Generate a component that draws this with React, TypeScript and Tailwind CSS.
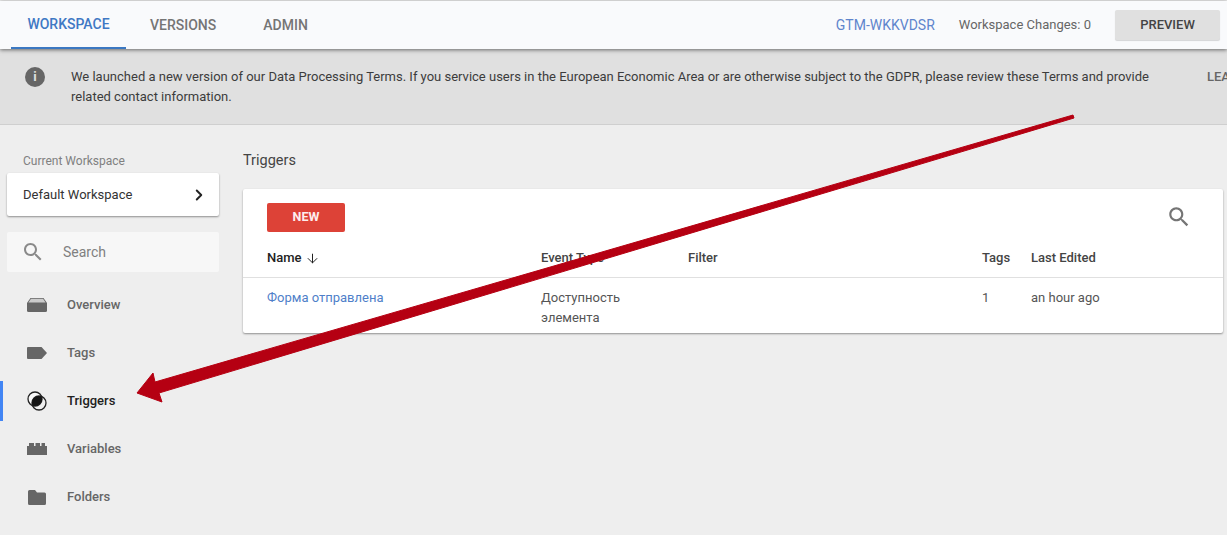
import React from 'react';
import { ArrowDown, ChevronRight } from 'lucide-react';

const font = { fontFamily: 'Roboto, sans-serif' };

function SearchIcon({ size, color }: { size: number; color: string }) {
  return (
    <svg width={size} height={size} viewBox="0 0 24 24" fill={color}>
      <path d="M15.5 14h-.79l-.28-.27C15.41 12.59 16 11.11 16 9.5 16 5.91 13.09 3 9.5 3S3 5.91 3 9.5 5.91 16 9.5 16c1.61 0 3.09-.59 4.23-1.57l.27.28v.79l5 4.99L20.49 19l-4.99-5zm-6 0C7.01 14 5 11.99 5 9.5S7.01 5 9.5 5 14 7.01 14 9.5 11.99 14 9.5 14z" />
    </svg>
  );
}

function OverviewIcon() {
  return (
    <svg width="20" height="14" viewBox="0 0 20 14">
      <path d="M3.5 0H16.5L20 5V12.5Q20 14 18.5 14H1.5Q0 14 0 12.5V5Z" fill="#666" />
      <path d="M4 .8H16L18.6 4.4H1.4Z" fill="#eee" opacity="0.75" />
    </svg>
  );
}

function TagIcon() {
  return (
    <svg width="20" height="12" viewBox="0 0 20 12">
      <path d="M1 0H14.5L20 6L14.5 12H1Q0 12 0 11V1Q0 0 1 0Z" fill="#666" />
    </svg>
  );
}

function TriggerIcon() {
  return (
    <svg width="20" height="20" viewBox="0 0 20 20">
      <circle cx="8" cy="8" r="7" fill="#f8f8f8" stroke="#222" strokeWidth="1.3" />
      <circle cx="12" cy="12" r="7" fill="none" stroke="#222" strokeWidth="1.3" />
      <path d="M14.53 5.47A7 7 0 0 1 5.47 14.53A7 7 0 0 1 14.53 5.47Z" fill="#151515" />
    </svg>
  );
}

function VariableIcon() {
  return (
    <svg width="20" height="12" viewBox="0 0 20 12">
      <path d="M0 3H2V0H7V3H8.5V0H13V3H14.5V0H18V3H20V12H0Z" fill="#666" />
    </svg>
  );
}

function FolderIcon() {
  return (
    <svg width="18" height="15" viewBox="0 0 18 15">
      <path d="M1.5 0H7L9 2.5H16.5Q18 2.5 18 4V13.5Q18 15 16.5 15H1.5Q0 15 0 13.5V1.5Q0 0 1.5 0Z" fill="#666" />
    </svg>
  );
}

const nav = [
  { label: 'Overview', icon: <OverviewIcon /> },
  { label: 'Tags', icon: <TagIcon /> },
  { label: 'Triggers', icon: <TriggerIcon />, active: true },
  { label: 'Variables', icon: <VariableIcon /> },
  { label: 'Folders', icon: <FolderIcon /> },
];

function Header() {
  return (
    <header className="relative z-10 mt-px flex h-[48px] items-center justify-between bg-[#f9fafc] shadow-[0_1px_4px_rgba(0,0,0,0.55)]">
      <nav className="ml-[11px] flex h-full text-[14px] font-medium text-[#757575]">
        <div className="flex w-[115px] items-center justify-center border-b-[2px] border-[#3b78c2] text-[#3f78c4]">WORKSPACE</div>
        <div className="ml-[24px] flex items-center">VERSIONS</div>
        <div className="ml-[47px] flex items-center">ADMIN</div>
      </nav>
      <div className="flex items-center pr-[7px] text-[14px]">
        <span className="text-[#5f85cc]">GTM-WKKVDSR</span>
        <span className="ml-[24px] text-[13px] text-[#666]">Workspace Changes: 0</span>
        <div className="ml-[24px] flex h-[30px] w-[105px] items-center justify-center rounded-[2px] bg-[#e0e0e0] text-[13px] font-medium text-[#444] shadow-[0_1px_1px_rgba(0,0,0,0.15)]">PREVIEW</div>
      </div>
    </header>
  );
}

function Banner() {
  return (
    <div className="relative flex h-[76px] overflow-hidden border-b border-[#cfcfcf] bg-[#e0e0e0] text-[13px] leading-[20px] text-[#3c3c3c]">
      <div className="ml-[25px] mt-[18px] flex h-[20px] w-[20px] items-center justify-center rounded-full bg-[#666] text-[13px] font-bold text-[#e0e0e0]">i</div>
      <p className="ml-[26px] mt-[18px] w-[1100px]">
        We launched a new version of our Data Processing Terms. If you service users in the European Economic Area or are otherwise subject to the GDPR, please review these Terms and provide related contact information.
      </p>
      <span className="absolute left-[1207px] top-[18px] font-medium text-[#666]">LEARN</span>
    </div>
  );
}

function Sidebar() {
  return (
    <aside className="w-[243px] shrink-0">
      <div className="ml-[23px] mt-[29px] text-[12px] leading-[14px] text-[#808080]">Current Workspace</div>
      <div className="ml-[7px] mt-[5px] flex h-[43px] w-[212px] items-center justify-between rounded-[2px] bg-white pl-[16px] pr-[11px] text-[13px] text-[#333] shadow-[0_1px_2px_rgba(0,0,0,0.4)]">
        Default Workspace
        <ChevronRight size={18} strokeWidth={2.6} color="#222" />
      </div>
      <div className="ml-[7px] mt-[16px] flex h-[40px] w-[212px] items-center rounded-[2px] bg-[#f7f7f7] pl-[14px] text-[14px] text-[#808080]">
        <SearchIcon size={24} color="#8a8a8a" />
        <span className="ml-[18px]">Search</span>
      </div>
      <ul className="mt-[9px]">
        {nav.map((item) => (
          <li key={item.label} className={`flex h-[48px] items-center text-[13px] font-medium ${item.active ? 'text-[#212121]' : 'text-[#666]'}`}>
            <span className={`h-[40px] w-[3px] ${item.active ? 'bg-[#4285f4]' : ''}`} />
            <span className="ml-[24px] flex w-[20px] justify-center">{item.icon}</span>
            <span className="ml-[20px]">{item.label}</span>
          </li>
        ))}
      </ul>
    </aside>
  );
}

function TriggersCard() {
  return (
    <section className="mr-[4px] mt-[20px] flex-1 rounded-[2px] bg-white text-[13px] shadow-[0_1px_2px_rgba(0,0,0,0.4)]">
      <div className="flex items-start justify-between pl-[24px] pr-[31px] pt-[14px]">
        <div className="flex h-[29px] w-[78px] items-center justify-center rounded-[2px] bg-[#dd4237] text-[12.5px] font-bold text-[#fdeeee]">NEW</div>
        <span className="mt-px"><SearchIcon size={26} color="#757575" /></span>
      </div>
      <div className="mt-[11px] grid h-[35px] grid-cols-[274px_147px_294px_49px_1fr] items-center border-b border-[#e0e0e0] pb-[4px] pl-[24px] font-medium text-[#444]">
        <span className="flex items-center gap-[3px] text-[#222]">Name <ArrowDown size={15} strokeWidth={1.6} /></span>
        <span>Event Type</span>
        <span>Filter</span>
        <span>Tags</span>
        <span>Last Edited</span>
      </div>
      <div className="grid h-[55px] grid-cols-[274px_147px_294px_49px_1fr] pl-[24px] pt-[10px] leading-[20px] text-[#555]">
        <span className="text-[#4f7fc9]">Форма отправлена</span>
        <span className="w-[100px]">Доступность элемента</span>
        <span />
        <span>1</span>
        <span>an hour ago</span>
      </div>
    </section>
  );
}

export default function App() {
  return (
    <div className="relative h-[535px] w-[1227px] overflow-hidden bg-[#eeeeee]" style={font}>
      <Header />
      <Banner />
      <div className="flex">
        <Sidebar />
        <main className="flex-1">
          <h1 className="mt-[27px] text-[14.5px] leading-[17px] text-[#444]">Triggers</h1>
          <TriggersCard />
        </main>
      </div>
      {/* red annotation arrow over the page */}
      <svg className="absolute left-0 top-0" width="1227" height="535" viewBox="0 0 1227 535">
        <path d="M1073 115L1074 118L159 393L162 402L137 393L153 373L155 382Z" fill="#b50012" stroke="#b50012" strokeWidth="1" strokeLinejoin="round" />
      </svg>
    </div>
  );
}
